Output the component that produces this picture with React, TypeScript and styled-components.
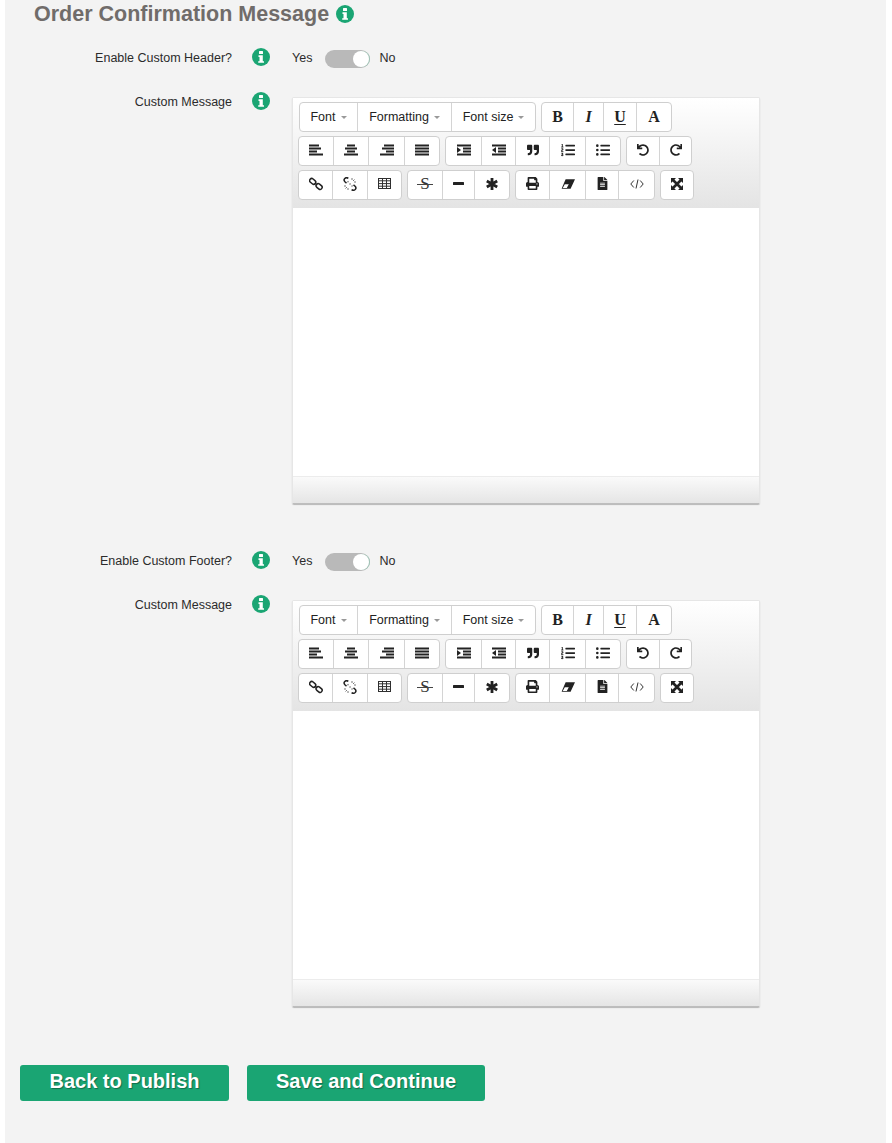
import { FunctionComponent, ReactNode } from 'react';
import styled, { createGlobalStyle } from 'styled-components';
import { FaFileAlt, FaListOl, FaListUl, FaPrint, FaQuoteRight, FaRedo, FaUndo } from 'react-icons/fa';

const GREEN = '#1aa573';

const GlobalStyle = createGlobalStyle`
  html, body {
    margin: 0;
    padding: 0;
    background: #fff;
    font-family: "Liberation Sans", Arial, sans-serif;
  }
`;

const Page = styled.div`
  width: 881px;
  height: 1143px;
  margin-left: 5px;
  background: #f3f3f3;
  overflow: hidden;
`;

const Title = styled.h2`
  display: flex;
  align-items: center;
  gap: 7px;
  margin: 0 0 0 29px;
  padding-top: 1px;
  height: 27px;
  font-size: 21.5px;
  font-weight: 700;
  color: #706c6a;

  svg {
    margin-top: -2px;
  }
`;

const Row = styled.div<{ $top: number }>`
  display: grid;
  grid-template-columns: 227px 60px 468px;
  margin-top: ${(p) => p.$top}px;
`;

const Label = styled.div`
  font-size: 12.5px;
  line-height: 20px;
  color: #2b2b2b;
  text-align: right;
`;

const Hint = styled.div`
  display: flex;
  justify-content: center;
  align-items: center;
  height: 18px;
  margin-left: -2px;
`;

const SwitchWrap = styled.div`
  display: flex;
  align-items: center;
  height: 20px;
  font-size: 12.5px;
  color: #2b2b2b;
`;

const Track = styled.div`
  display: flex;
  justify-content: flex-end;
  align-items: center;
  width: 45px;
  height: 18px;
  margin: 2px 9px 0 13px;
  padding-right: 1px;
  box-sizing: border-box;
  border-radius: 9px;
  background: #b9b9b9;
`;

const Knob = styled.div`
  width: 16px;
  height: 16px;
  border-radius: 50%;
  background: #fff;
  box-shadow: 1px 0 0 #9fc4b6;
`;

const Editor = styled.div`
  width: 468px;
  height: 407px;
  margin-top: 5px;
  box-sizing: border-box;
  display: flex;
  flex-direction: column;
  border: 1px solid #e6e6e6;
  border-bottom: 0;
  border-radius: 2px;
  box-shadow: 0 1px 1px rgba(0, 0, 0, 0.25);
`;

const Toolbar = styled.div`
  height: 110px;
  flex: none;
  box-sizing: border-box;
  padding: 4px 0 0 5px;
  background: linear-gradient(#fff, #e4e4e4);
  display: flex;
  flex-direction: column;
  gap: 4px;
`;

const ToolRow = styled.div<{ $indent: number }>`
  display: flex;
  gap: 5px;
  height: 30px;
  margin-left: ${(p) => p.$indent}px;
`;

const Group = styled.div`
  display: flex;
  height: 100%;
  box-sizing: border-box;
  background: #fff;
  border: 1px solid #cfcfcf;
  border-radius: 4px;
`;

const Tool = styled.div<{ $w: number; $serif?: boolean; $italic?: boolean; $under?: boolean }>`
  width: ${(p) => p.$w}px;
  display: flex;
  align-items: center;
  justify-content: center;
  gap: 5px;
  box-sizing: border-box;
  color: #222;
  font-size: ${(p) => (p.$serif ? 16 : 12.5)}px;
  font-family: ${(p) => (p.$serif ? '"Liberation Serif", serif' : 'inherit')};
  font-weight: ${(p) => (p.$serif ? 700 : 400)};
  font-style: ${(p) => (p.$italic ? 'italic' : 'normal')};
  text-decoration: ${(p) => (p.$under ? 'underline' : 'none')};
  text-decoration-thickness: 1px;
  text-underline-offset: 2px;
  & + & {
    border-left: 1px solid #d4d4d4;
  }
  svg {
    display: block;
    margin-top: -3px;
  }
`;

const StrikeS = styled.span`
  position: relative;
  margin-top: -3px;
  font-family: "Liberation Serif", serif;
  font-size: 17px;
  color: #333;

  &::after {
    content: '';
    position: absolute;
    left: -3px;
    right: -3px;
    top: 10px;
    height: 1px;
    background: #444;
  }
`;

const Caret = styled.span`
  width: 0;
  height: 0;
  border-left: 3px solid transparent;
  border-right: 3px solid transparent;
  border-top: 3px solid #999;
`;

const EditArea = styled.div`
  flex: 1;
  background: #fff;
  border-bottom: 1px solid #ececec;
`;

const StatusBar = styled.div`
  height: 27px;
  flex: none;
  box-sizing: border-box;
  background: linear-gradient(#fafafa, #e5e5e5);
  border-bottom: 1px solid #bdbdbd;
`;

const Actions = styled.div`
  display: flex;
  gap: 18px;
  margin: 58px 0 0 15px;
`;

const ActionButton = styled.button<{ $w: number }>`
  width: ${(p) => p.$w}px;
  height: 36px;
  padding: 0 0 3px;
  border: 0;
  border-radius: 3px;
  background: ${GREEN};
  color: #fff;
  font-family: inherit;
  font-size: 20px;
  font-weight: 700;
  text-shadow: 1px 1px 1px rgba(0, 0, 0, 0.35);
`;

const InfoIcon = () => (
  <svg width="18" height="18" viewBox="0 0 18 18">
    <circle cx="9" cy="9" r="9" fill={GREEN} />
    <rect x="7" y="3" width="4" height="3" rx="0.5" fill="#fff" />
    <path d="M6.5 7.3h4.3v5.9H12v1.6H6.2v-1.6h1.3V8.9h-1z" fill="#fff" />
  </svg>
);

const Bars: FunctionComponent<{ rows: [number, number][] }> = ({ rows }) => (
  <svg width="14" height="12" viewBox="0 0 14 12" fill="#222">
    {rows.map(([x, w], i) => (
      <rect key={i} x={x} y={i * 3 + 0.5} width={w} height="2" />
    ))}
  </svg>
);

const IndentIcon: FunctionComponent<{ flip?: boolean }> = ({ flip }) => (
  <svg width="14" height="12" viewBox="0 0 14 12" fill="#222">
    <rect x="0" y="0.5" width="14" height="2" />
    <rect x="6" y="3.5" width="8" height="2" />
    <rect x="6" y="6.5" width="8" height="2" />
    <rect x="0" y="9.5" width="14" height="2" />
    <path d={flip ? 'M4 3L0 6l4 3z' : 'M0 3l4 3-4 3z'} />
  </svg>
);

const LinkIcon = () => (
  <svg width="14" height="14" viewBox="0 0 14 14" fill="none" stroke="#222" strokeWidth="1.5">
    <rect x="0.4" y="2.3" width="6.6" height="4.2" rx="2.1" transform="rotate(40 3.7 4.4)" />
    <rect x="6.8" y="7.4" width="6.6" height="4.2" rx="2.1" transform="rotate(40 10.1 9.5)" />
    <path d="M5.8 5.8l2.4 2.4" />
  </svg>
);

const UnlinkIcon = () => (
  <svg width="14" height="14" viewBox="0 0 14 14" fill="none" stroke="#222" strokeWidth="1.5">
    <path d="M5.3 1.3C4 .4 2.6.6 1.8 1.5.9 2.5 1 3.9 1.9 4.8l1.6 1.3" />
    <path d="M8.6 12.7c1.3.9 2.7.7 3.6-.2.9-1 .8-2.4-.1-3.3L10.5 7.9" />
    <path d="M4.5 4.2l5 5.4" strokeDasharray="1.5 1.5" stroke="#888" />
    <path d="M9 1v2M11.5 2.5l-1.5 1.5M13 5h-2M1 9h2M2.5 11.5L4 10M5 13v-2" stroke="#666" strokeWidth="0.9" />
  </svg>
);

const TableIcon = () => (
  <svg width="13" height="11" viewBox="0 0 13 11" fill="none" stroke="#2f2f2f" strokeWidth="1">
    <rect x="0.5" y="0.5" width="12" height="10" />
    <path d="M0.5 2.8h12M0.5 5.6h12M0.5 8.2h12M4.5 0.5v10M8.5 0.5v10" />
  </svg>
);

const MinusIcon = () => (
  <svg width="11" height="3" viewBox="0 0 11 3" fill="#222">
    <rect width="11" height="3" rx="0.5" />
  </svg>
);

const AsteriskIcon = () => (
  <svg width="12" height="12" viewBox="0 0 12 12" stroke="#222" strokeWidth="2.8">
    <path d="M6 0v12M.8 3l10.4 6M.8 9l10.4-6" />
  </svg>
);

const EraserIcon = () => (
  <svg width="14" height="10" viewBox="0 0 14 10">
    <path d="M4.6 0.2H14L9.6 9.8H0.6z" fill="#222" />
    <path d="M1.8 8.9l2-3.6h4l-2 3.6z" fill="#fff" />
  </svg>
);

const CodeIcon = () => (
  <svg width="14" height="10" viewBox="0 0 14 10" fill="none" stroke="#333" strokeWidth="1">
    <path d="M3.8 1.5L.8 5l3 3.5M10.2 1.5l3 3.5-3 3.5M8 0.5L6 9.5" />
  </svg>
);

const ExpandIcon = () => (
  <svg width="12" height="12" viewBox="0 0 12 12" fill="#222" stroke="#222">
    <path d="M2 2l8 8M10 2l-8 8" strokeWidth="2.6" />
    <path d="M0 0h5L0 5zM12 0v5L7 0zM0 12V7l5 5zM12 12H7l5-5z" strokeWidth="0" />
  </svg>
);

type ToolDef = { w: number; node: ReactNode; serif?: boolean; italic?: boolean; under?: boolean };

const dd = (label: string) => (
  <>
    {label}
    <Caret />
  </>
);

const row1: ToolDef[][] = [
  [
    { w: 57, node: dd('Font') },
    { w: 94, node: dd('Formatting') },
    { w: 84, node: dd('Font size') },
  ],
  [
    { w: 31, node: 'B', serif: true },
    { w: 30, node: 'I', serif: true, italic: true },
    { w: 33, node: 'U', serif: true, under: true },
    { w: 35, node: 'A', serif: true },
  ],
];

const row2: ToolDef[][] = [
  [
    { w: 34, node: <Bars rows={[[0, 10], [0, 12], [0, 8], [0, 14]]} /> },
    { w: 35, node: <Bars rows={[[3, 8], [1, 12], [3, 8], [0, 14]]} /> },
    { w: 36, node: <Bars rows={[[4, 10], [2, 12], [6, 8], [0, 14]]} /> },
    { w: 35, node: <Bars rows={[[0, 14], [0, 14], [0, 14], [0, 14]]} /> },
  ],
  [
    { w: 35, node: <IndentIcon /> },
    { w: 34, node: <IndentIcon flip /> },
    { w: 34, node: <FaQuoteRight size={12} /> },
    { w: 36, node: <FaListOl size={14} /> },
    { w: 35, node: <FaListUl size={14} /> },
  ],
  [
    { w: 32, node: <FaUndo size={12} /> },
    { w: 32, node: <FaRedo size={12} /> },
  ],
];

const row3: ToolDef[][] = [
  [
    { w: 33, node: <LinkIcon /> },
    { w: 35, node: <UnlinkIcon /> },
    { w: 34, node: <TableIcon /> },
  ],
  [
    { w: 34, node: <StrikeS>S</StrikeS> },
    { w: 32, node: <MinusIcon /> },
    { w: 35, node: <AsteriskIcon /> },
  ],
  [
    { w: 33, node: <FaPrint size={13} /> },
    { w: 36, node: <EraserIcon /> },
    { w: 33, node: <FaFileAlt size={13} /> },
    { w: 36, node: <CodeIcon /> },
  ],
  [{ w: 32, node: <ExpandIcon /> }],
];

const ToolLine: FunctionComponent<{ groups: ToolDef[][]; indent: number }> = ({ groups, indent }) => (
  <ToolRow $indent={indent}>
    {groups.map((g, i) => (
      <Group key={i}>
        {g.map((t, j) => (
          <Tool key={j} $w={t.w} $serif={t.serif} $italic={t.italic} $under={t.under}>
            {t.node}
          </Tool>
        ))}
      </Group>
    ))}
  </ToolRow>
);

const MessageEditor = () => (
  <Editor>
    <Toolbar>
      <ToolLine groups={row1} indent={1} />
      <ToolLine groups={row2} indent={0} />
      <ToolLine groups={row3} indent={0} />
    </Toolbar>
    <EditArea />
    <StatusBar />
  </Editor>
);

const Section: FunctionComponent<{ label: string; top: number }> = ({ label, top }) => (
  <>
    <Row $top={top}>
      <Label>{label}</Label>
      <Hint>
        <InfoIcon />
      </Hint>
      <SwitchWrap>
        Yes
        <Track>
          <Knob />
        </Track>
        No
      </SwitchWrap>
    </Row>
    <Row $top={24}>
      <Label>Custom Message</Label>
      <Hint>
        <InfoIcon />
      </Hint>
      <MessageEditor />
    </Row>
  </>
);

export default function App() {
  return (
    <>
      <GlobalStyle />
      <Page>
        <Title>
          Order Confirmation Message
          <InfoIcon />
        </Title>
        <Section label="Enable Custom Header?" top={20} />
        <Section label="Enable Custom Footer?" top={47} />
        <Actions>
          <ActionButton $w={209}>Back to Publish</ActionButton>
          <ActionButton $w={238}>Save and Continue</ActionButton>
        </Actions>
      </Page>
    </>
  );
}
